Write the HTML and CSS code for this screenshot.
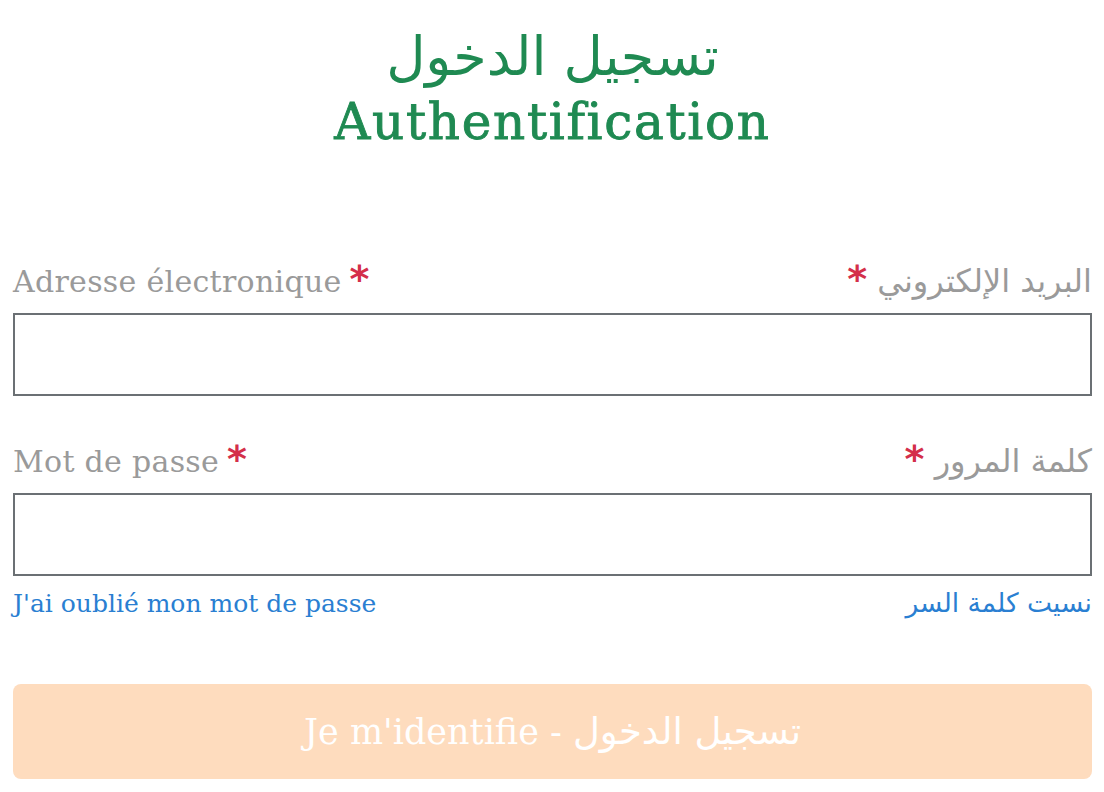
FILE: index.html
```html
<!DOCTYPE html>
<html lang="fr">
<head>
<meta charset="utf-8">
<title>Authentification</title>
<link rel="stylesheet" href="styles.css">
</head>
<body>
<main class="page">
  <h1 class="title">
    <span class="title-ar" lang="ar" dir="rtl">تسجيل الدخول</span>
    <span class="title-fr">Authentification</span>
  </h1>

  <form class="form">
    <div class="field">
      <div class="label-row">
        <label class="label-fr" for="email">Adresse électronique <span class="req">*</span></label>
        <label class="label-ar" for="email" lang="ar" dir="rtl">البريد الإلكتروني <span class="req">*</span></label>
      </div>
      <input class="input" id="email" type="email">
    </div>

    <div class="field field-pass">
      <div class="label-row">
        <label class="label-fr" for="pass">Mot de passe <span class="req">*</span></label>
        <label class="label-ar" for="pass" lang="ar" dir="rtl">كلمة المرور <span class="req">*</span></label>
      </div>
      <input class="input" id="pass" type="password">
      <div class="link-row">
        <a class="link-fr" href="#">J'ai oublié mon mot de passe</a>
        <a class="link-ar" href="#" lang="ar" dir="rtl">نسيت كلمة السر</a>
      </div>
    </div>

    <button class="submit" type="button">Je m'identifie - <span lang="ar">تسجيل الدخول</span></button>
  </form>
</main>
</body>
</html>
```

FILE: styles.css
```css
* { box-sizing: border-box; }

body {
  margin: 0;
  background: #ffffff;
  font-family: "DejaVu Serif", "Noto Sans Arabic", "DejaVu Sans", serif;
}

.page {
  padding: 0 12px 0 13px;
}

.title {
  margin: 22px 0 0;
  display: flex;
  flex-direction: column;
  align-items: center;
  color: #1f8a52;
  font-weight: normal;
}

.title-ar {
  font-family: "DejaVu Sans", sans-serif;
  font-size: 54px;
  line-height: 70px;
}

.title-fr {
  font-size: 50px;
  line-height: 60px;
  letter-spacing: 1.7px;
  -webkit-text-stroke: 0.9px #1f8a52;
}

.form {
  margin-top: 110px;
  display: flex;
  flex-direction: column;
}

.label-row {
  display: flex;
  justify-content: space-between;
  align-items: baseline;
  height: 38px;
  margin-bottom: 13px;
}

.label-fr {
  font-size: 30px;
  letter-spacing: 0.3px;
  color: #9a9a9a;
}

.label-ar {
  font-family: "DejaVu Sans", sans-serif;
  font-size: 32px;
  color: #9a9a9a;
}

.req {
  color: #d42f4a;
  font-family: "DejaVu Sans", sans-serif;
  font-weight: bold;
  font-size: 38px;
  line-height: 0;
}

.label-fr .req { margin-left: -2px; }
.label-ar .req { margin-right: 0; }

.input {
  display: block;
  width: 100%;
  height: 83px;
  border: 2px solid #6b7074;
  background: #fff;
  margin: 0;
}

.field-pass {
  margin-top: 46px;
}

.link-row {
  display: flex;
  justify-content: space-between;
  align-items: baseline;
  margin-top: 11px;
}

.link-fr, .link-ar {
  color: #2a7fd2;
  text-decoration: none;
  font-size: 25px;
}

.link-ar {
  font-family: "DejaVu Sans", sans-serif;
  font-size: 26.5px;
}

.submit {
  margin-top: 66px;
  height: 95px;
  width: 100%;
  border: none;
  border-radius: 8px;
  background: #fedcbe;
  color: #ffffff;
  font-family: "DejaVu Serif", "DejaVu Sans", serif;
  font-size: 35px;
}

.submit span {
  font-family: "DejaVu Sans", sans-serif;
  font-size: 37px;
}
```
